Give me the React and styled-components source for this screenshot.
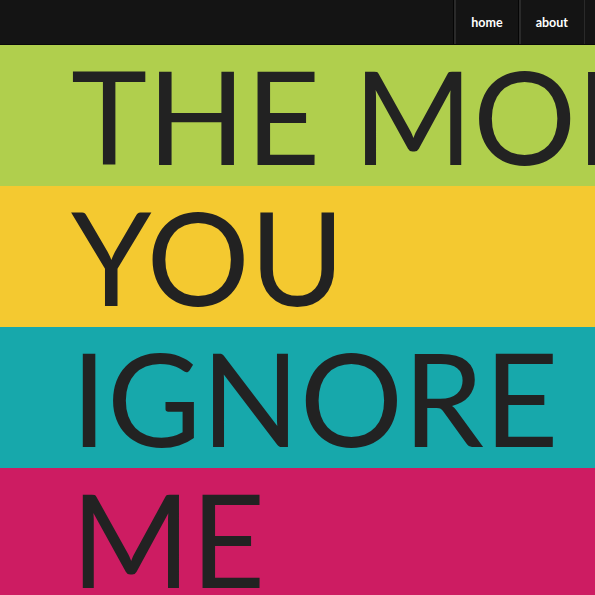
import React from "react";
import styled, { createGlobalStyle } from "styled-components";

const Global = createGlobalStyle`
  html, body { margin: 0; padding: 0; background: #cd1c62; overflow: hidden; }
  body { font-family: Lato, "Open Sans", sans-serif; }
`;

const Page = styled.div`
  width: 595px;
  height: 595px;
  overflow: hidden;
  display: flex;
  flex-direction: column;
`;

const NavBar = styled.nav`
  flex: none;
  height: 44px;
  background: #141414;
  border-bottom: 1px solid #0a0a0a;
  display: flex;
  justify-content: flex-end;
  padding-right: 10px;
`;

const NavLink = styled.a`
  display: flex;
  align-items: center;
  padding: 0 16px 0 16px;
  color: #fff;
  font-family: Lato, sans-serif;
  font-weight: 700;
  font-size: 12.5px;
  text-decoration: none;
  border-left: 1px solid #2a2a2a;
  box-shadow: inset 1px 0 0 #2a2a2a, -1px 0 0 #050505;
  &:last-child {
    border-right: 1px solid #2a2a2a;
  }
`;

const Band = styled.div`
  flex: none;
  height: 141px;
  background: ${(p) => p.$bg};
  color: #222222;
  font-family: Lato, sans-serif;
  font-weight: 400;
  font-size: 129px;
  line-height: 141px;
  white-space: nowrap;
  padding-left: 71px;
  overflow: hidden;
`;

const lines = [
  { text: "THE MORE", bg: "#b0cf4d" },
  { text: "YOU", bg: "#f4c930" },
  { text: "IGNORE", bg: "#17a8ab" },
  { text: "ME", bg: "#cd1c62" },
];

export default function App() {
  return (
    <>
      <Global />
      <Page>
        <NavBar>
          <NavLink href="#">home</NavLink>
          <NavLink href="#">about</NavLink>
        </NavBar>
        {lines.map((l) => (
          <Band key={l.text} $bg={l.bg}>
            {l.text}
          </Band>
        ))}
      </Page>
    </>
  );
}
